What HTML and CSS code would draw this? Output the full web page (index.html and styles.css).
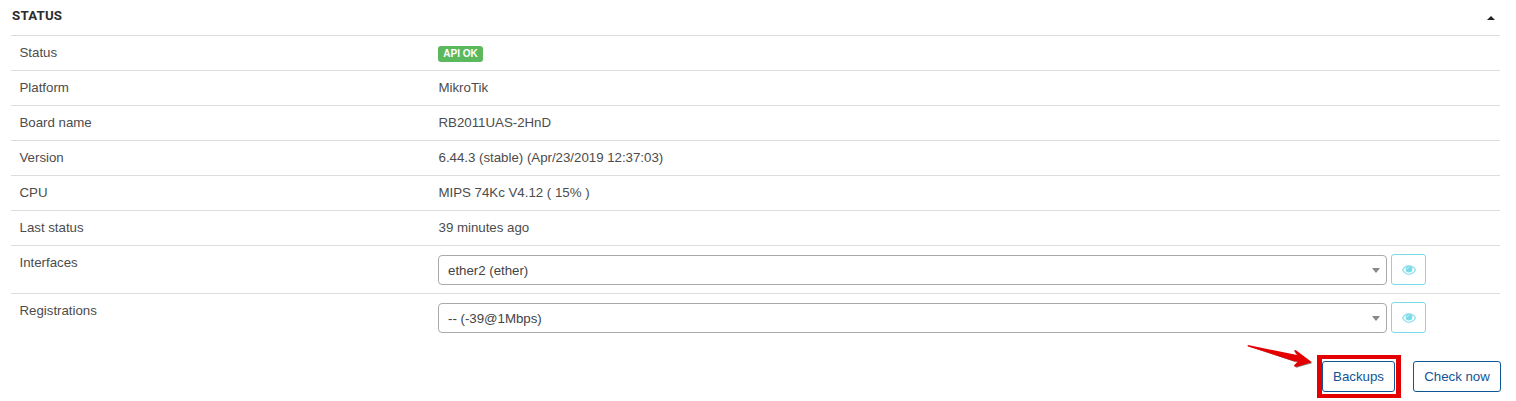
FILE: index.html
```html
<!DOCTYPE html>
<html lang="en">
<head>
<meta charset="utf-8">
<title>Router status</title>
<link rel="stylesheet" href="styles.css">
</head>
<body>
<main class="panel">
  <header class="panel-header">
    <h2 class="panel-title"><span>STATUS</span></h2>
    <svg class="collapse" width="8" height="4" viewBox="0 0 8 4"><path d="M0 4L4 0L8 4Z"/></svg>
  </header>
  <dl class="rows">
    <div class="row"><dt><span>Status</span></dt><dd><span class="badge">API OK</span></dd></div>
    <div class="row"><dt><span>Platform</span></dt><dd><span>MikroTik</span></dd></div>
    <div class="row"><dt><span>Board name</span></dt><dd><span>RB2011UAS-2HnD</span></dd></div>
    <div class="row"><dt><span>Version</span></dt><dd><span>6.44.3 (stable) (Apr/23/2019 12:37:03)</span></dd></div>
    <div class="row"><dt><span>CPU</span></dt><dd><span>MIPS 74Kc V4.12 ( 15% )</span></dd></div>
    <div class="row"><dt><span>Last status</span></dt><dd><span>39 minutes ago</span></dd></div>
    <div class="row row-tall"><dt><span>Interfaces</span></dt><dd class="control">
      <div class="select"><span>ether2 (ether)</span><i class="caret"></i></div>
      <button class="view" aria-label="View"><svg width="14" height="10" viewBox="0 0 14 10"><path class="lid" d="M.6 5C2.2 2.2 4.4.8 7 .8S11.8 2.2 13.4 5C11.8 7.8 9.6 9.2 7 9.2S2.2 7.8.6 5Z"/><circle cx="7" cy="4.3" r="3.3"/><path class="glint" d="M5.2 4.2C5.2 3.2 5.9 2.5 7 2.5"/></svg></button>
    </dd></div>
    <div class="row row-tall"><dt><span>Registrations</span></dt><dd class="control">
      <div class="select"><span>-- (-39@1Mbps)</span><i class="caret"></i></div>
      <button class="view" aria-label="View"><svg width="14" height="10" viewBox="0 0 14 10"><path class="lid" d="M.6 5C2.2 2.2 4.4.8 7 .8S11.8 2.2 13.4 5C11.8 7.8 9.6 9.2 7 9.2S2.2 7.8.6 5Z"/><circle cx="7" cy="4.3" r="3.3"/><path class="glint" d="M5.2 4.2C5.2 3.2 5.9 2.5 7 2.5"/></svg></button>
    </dd></div>
  </dl>
  <footer class="actions">
    <div class="highlight">
      <button class="btn btn-backups"><span>Backups</span></button>
      <svg class="arrow" width="70" height="28" viewBox="0 0 70 28"><path class="arrow-shadow" d="M1 1L48 17L52 17.5L48.5 23L65 18.3L50 7L52 11Z"/><path d="M1 0Q0 .8 1 1.4L47 16.2L51 16.6L47 20.3Q47 22 49 22L65 17.3L49 5.2Q47 4.5 47.5 6.5L50 10Z"/></svg>
    </div>
    <button class="btn btn-check"><span>Check now</span></button>
  </footer>
</main>
</body>
</html>
```
FILE: styles.css
```css
* { box-sizing: border-box; }
body {
  margin: 0;
  background: #fff;
  color: #4c4c4c;
  font: 13.3px/19px "Liberation Sans", Arial, sans-serif;
  letter-spacing: -.02px;
}
.panel { width: 1490px; margin-left: 11px; }
.panel-header {
  display: flex;
  justify-content: space-between;
  height: 35px;
  padding: 6px 6px 0 1px;
  width: 1490px;
}
.panel-title {
  margin: 0;
  color: #2c2c2c;
  font: 700 13.3px/20px Roboto, sans-serif;
  letter-spacing: .2px;
}
.collapse { margin-top: 10px; fill: #222; }
.rows { margin: 0; width: 1489px; }
.row {
  display: grid;
  grid-template-columns: 419px 1fr;
  height: 35px;
  padding: 7px 8px;
  border-top: 1px solid #ddd;
}
.row-tall { height: 48px; }
dt, dd { margin: 0; }
dt > span, dd > span:not(.badge) { padding-left: .5px; }
.badge {
  display: block;
  width: 45px;
  height: 16px;
  margin-top: 3px;
  border-radius: 3px;
  background: #5cb85c;
  color: #fff;
  font-size: 10px;
  font-weight: 700;
  line-height: 16px;
  letter-spacing: 0;
  text-align: center;
}
.control { display: flex; gap: 4px; padding-top: 1px; }
.select {
  display: flex;
  align-items: center;
  justify-content: space-between;
  width: 949px;
  height: 30px;
  margin-top: 1px;
  padding: 0 6px 0 9px;
  border: 1px solid #aaa;
  border-radius: 4px;
  color: #444;
}
.caret {
  border: 4px solid transparent;
  border-top: 5px solid #888;
  border-bottom: 0;
}
.view {
  display: flex;
  align-items: center;
  justify-content: center;
  width: 35px;
  height: 31px;
  padding: 0;
  border: 1px solid #7adbe8;
  border-radius: 3px;
  background: #fff;
}
.view svg { fill: #7adbe8; }
.view .lid { fill: none; stroke: #7adbe8; stroke-width: 1.1; }
.view .glint { fill: none; stroke: #fff; stroke-width: .6; }
.actions {
  display: flex;
  justify-content: flex-end;
  gap: 12px;
  margin-top: 14px;
}
.highlight {
  position: relative;
  width: 84px;
  height: 43px;
  padding: 2px 0;
  border: 4px solid #e40000;
  border-width: 4px 5px;
}
.btn {
  height: 31px;
  padding: 0;
  border: 1px solid #0f5697;
  border-radius: 3px;
  background: #fff;
  color: #0f5697;
  font: inherit;
  letter-spacing: -.02px;
}
.btn-backups { width: 73px; }
.btn-check { width: 88px; margin-top: 6px; }
.arrow {
  position: absolute;
  left: -75px;
  top: -14px;
  fill: #e40000;
}
.arrow-shadow { fill: #888; }
```
